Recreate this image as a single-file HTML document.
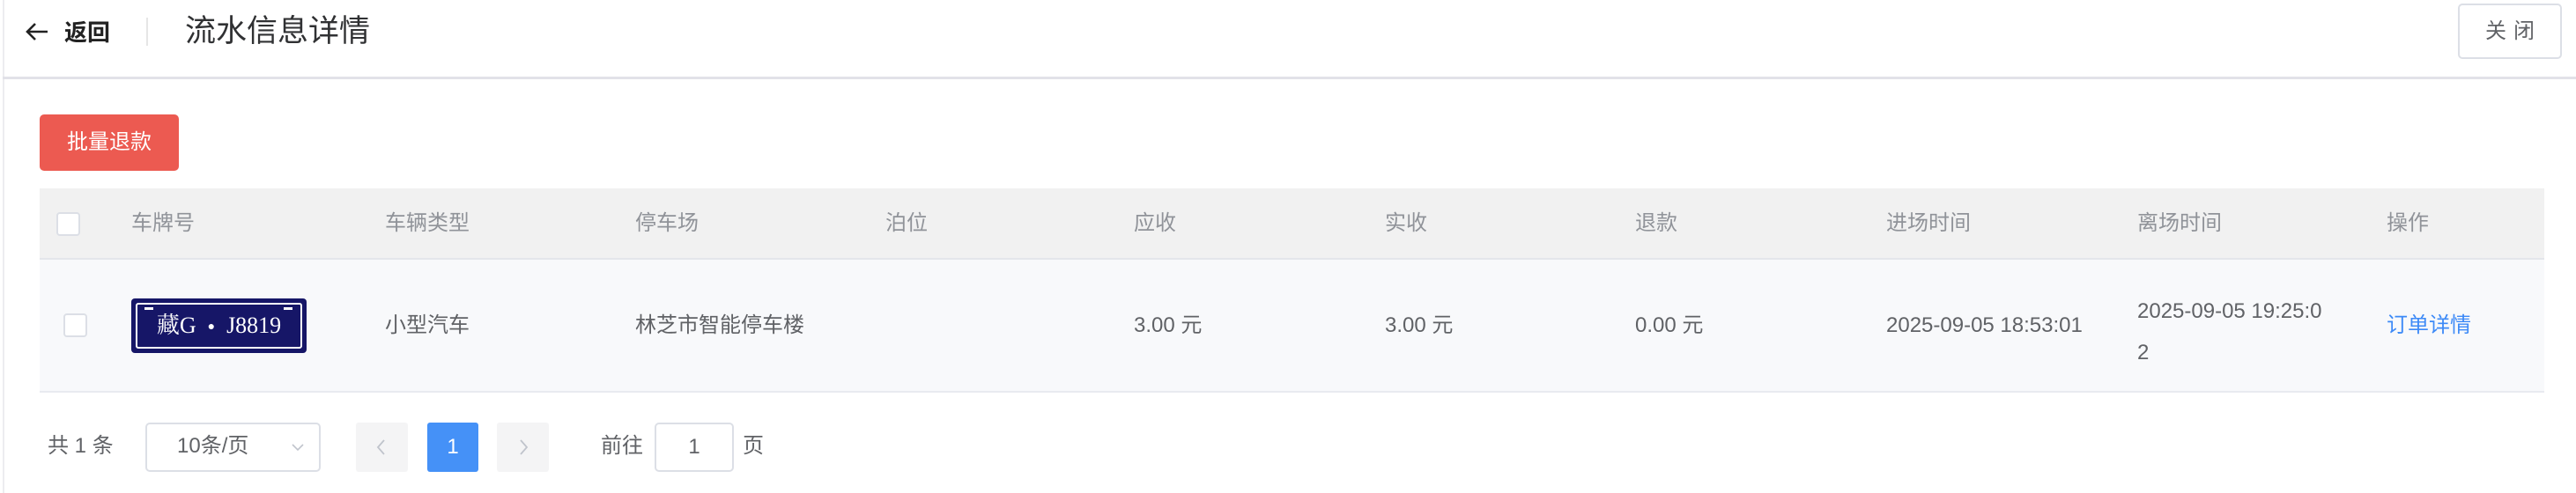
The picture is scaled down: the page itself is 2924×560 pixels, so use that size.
<!DOCTYPE html>
<html><head><meta charset="utf-8"><style>
*{margin:0;padding:0;box-sizing:border-box}
body{width:2924px;height:560px;background:#fff;position:relative;overflow:hidden;font-family:"Liberation Sans","Noto Sans CJK SC",sans-serif;color:#606266}
.a{position:absolute;white-space:nowrap}
.h{font-size:24px;color:#909399;top:238px;line-height:32px}
.c{font-size:24px;color:#606266;top:354px;line-height:32px}
.cb{position:absolute;width:27px;height:27px;border:2px solid #dcdfe6;border-radius:4px;background:#fff}
.pb{position:absolute;top:480px;height:56px;width:59px;background:#f4f4f5;border-radius:3px}
</style></head><body>
<div class="a" style="left:3px;top:0;width:2px;height:560px;background:#ececf0"></div>
<svg class="a" style="left:28px;top:24px" width="28" height="24" viewBox="0 0 28 24"><path d="M26 12H3M12 3L3 12l9 9" fill="none" stroke="#222" stroke-width="2.6"/></svg>
<div class="a" style="left:73px;top:20px;font-size:26px;line-height:34px;color:#222;font-weight:bold">返回</div>
<div class="a" style="left:166px;top:20px;width:2px;height:32px;background:#e6e6e6"></div>
<div class="a" style="left:210px;top:15px;font-size:35px;line-height:42px;color:#303133">流水信息详情</div>
<div class="a" style="left:2790px;top:4px;width:118px;height:63px;border:2px solid #dcdfe6;border-radius:5px;font-size:24px;color:#606266;text-align:center;line-height:59px;letter-spacing:8px;padding-left:8px">关闭</div>
<div class="a" style="left:3px;top:87px;width:2921px;height:3px;background:#e2e2e8"></div>
<div class="a" style="left:45px;top:130px;width:158px;height:64px;background:#ec5a51;border-radius:5px;color:#fff;font-size:24px;line-height:64px;text-align:center">批量退款</div>
<div class="a" style="left:45px;top:214px;width:2843px;height:81px;background:#f1f1f1;border-bottom:2px solid #e4e6eb"></div>
<div class="a" style="left:45px;top:295px;width:2843px;height:151px;background:#f8f9fb;border-bottom:2px solid #e8eaf0"></div>
<div class="cb" style="left:64px;top:241px"></div>
<div class="a h" style="left:149px">车牌号</div>
<div class="a h" style="left:437px">车辆类型</div>
<div class="a h" style="left:721px">停车场</div>
<div class="a h" style="left:1005px">泊位</div>
<div class="a h" style="left:1287px">应收</div>
<div class="a h" style="left:1572px">实收</div>
<div class="a h" style="left:1856px">退款</div>
<div class="a h" style="left:2141px">进场时间</div>
<div class="a h" style="left:2426px">离场时间</div>
<div class="a h" style="left:2709px">操作</div>
<div class="cb" style="left:72px;top:356px"></div>
<div class="a" style="left:149px;top:339px;width:199px;height:62px;background:#161667;border-radius:4px"></div>
<div class="a" style="left:154px;top:344px;width:189px;height:52px;border:2px solid #fff;border-radius:3px;color:#fff;font-family:'Liberation Serif','Noto Serif CJK SC',serif;font-size:26px;line-height:48px;text-align:center">藏G&nbsp;&nbsp;<span style="font-size:14px;vertical-align:3px">●</span>&nbsp;&nbsp;J8819</div>
<div class="a" style="left:164px;top:349px;width:10px;height:3px;background:#fff"></div>
<div class="a" style="left:322px;top:349px;width:10px;height:3px;background:#fff"></div>
<div class="a c" style="left:437px">小型汽车</div>
<div class="a c" style="left:721px">林芝市智能停车楼</div>
<div class="a c" style="left:1287px">3.00 元</div>
<div class="a c" style="left:1572px">3.00 元</div>
<div class="a c" style="left:1856px">0.00 元</div>
<div class="a c" style="left:2141px">2025-09-05 18:53:01</div>
<div class="a c" style="left:2426px;top:330px;line-height:47px">2025-09-05 19:25:0<br>2</div>
<div class="a c" style="left:2709px;color:#3d8af7">订单详情</div>
<div class="a" style="left:54px;top:491px;font-size:24px;line-height:32px">共 1 条</div>
<div class="a" style="left:165px;top:480px;width:199px;height:56px;border:2px solid #dcdfe6;border-radius:5px"></div>
<div class="a" style="left:201px;top:491px;font-size:24px;line-height:32px">10条/页</div>
<svg class="a" style="left:330px;top:502px" width="16" height="12" viewBox="0 0 16 12"><path d="M2 3l6 6 6-6" fill="none" stroke="#c0c4cc" stroke-width="1.6"/></svg>
<div class="pb" style="left:404px"></div>
<svg class="a" style="left:426px;top:498px" width="14" height="20" viewBox="0 0 14 20"><path d="M10 2L3 10l7 8" fill="none" stroke="#c0c4cc" stroke-width="1.8"/></svg>
<div class="a" style="left:485px;top:480px;width:58px;height:56px;background:#4591f7;border-radius:3px;color:#fff;font-size:24px;text-align:center;line-height:56px">1</div>
<div class="pb" style="left:564px"></div>
<svg class="a" style="left:587px;top:498px" width="14" height="20" viewBox="0 0 14 20"><path d="M4 2l7 8-7 8" fill="none" stroke="#c0c4cc" stroke-width="1.8"/></svg>
<div class="a" style="left:682px;top:491px;font-size:24px;line-height:32px">前往</div>
<div class="a" style="left:743px;top:480px;width:90px;height:56px;border:2px solid #dcdfe6;border-radius:5px;text-align:center;line-height:52px;font-size:24px">1</div>
<div class="a" style="left:843px;top:491px;font-size:24px;line-height:32px">页</div>
</body></html>
